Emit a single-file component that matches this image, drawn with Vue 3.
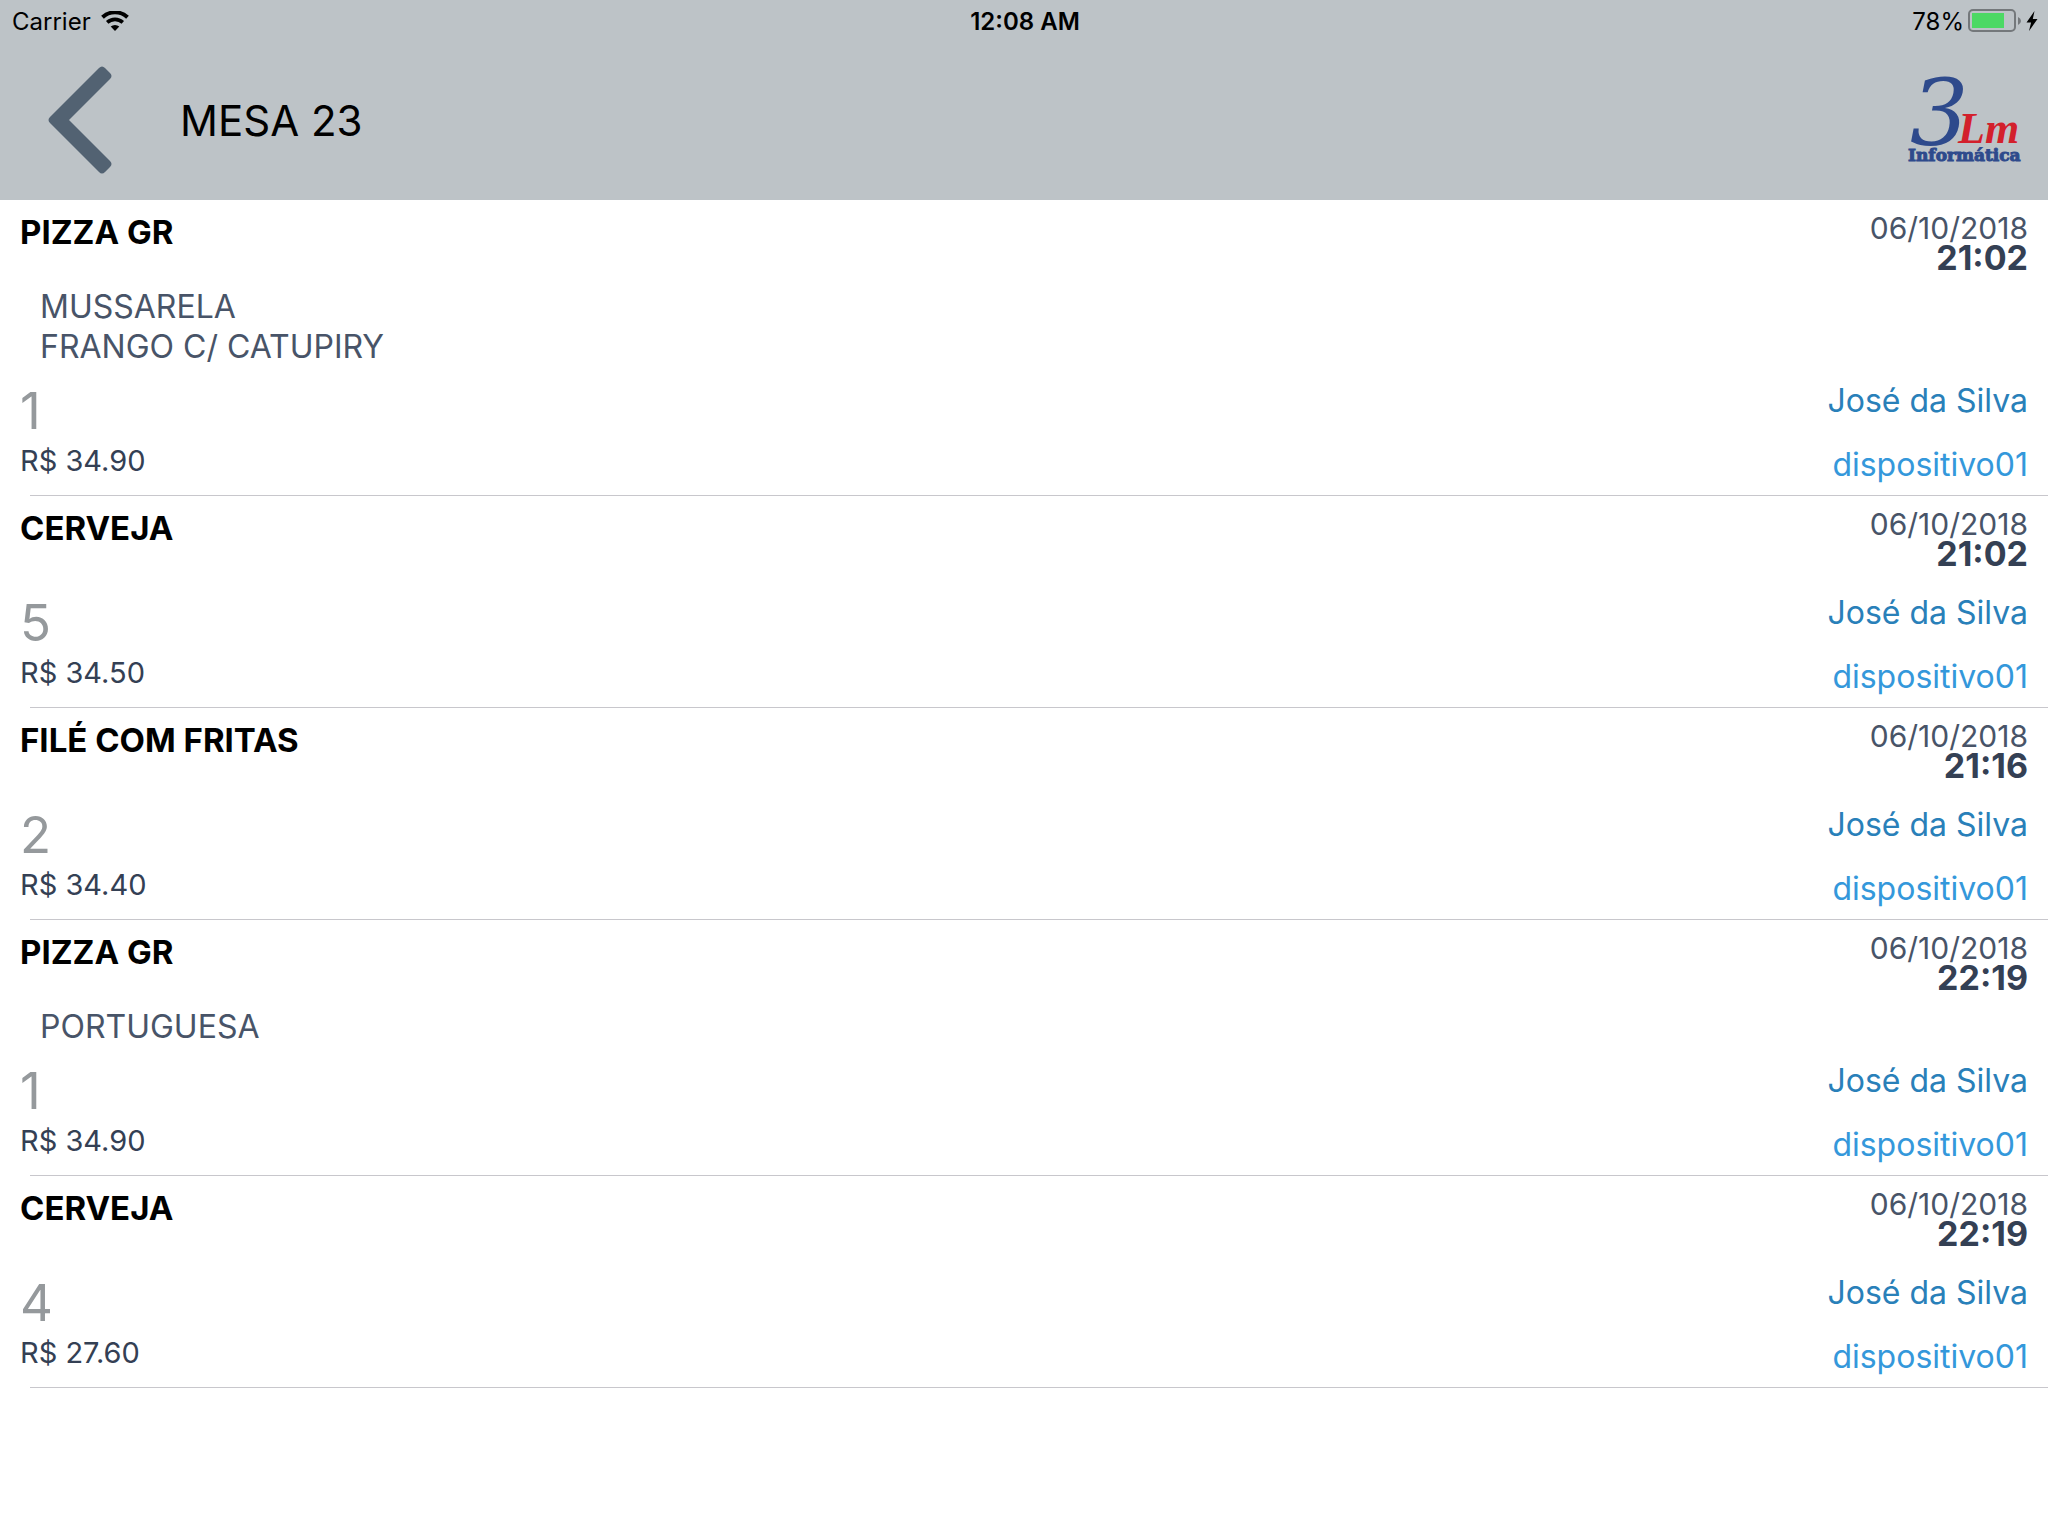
<script setup>
const orders = [
  { name: 'PIZZA GR', extras: ['MUSSARELA', 'FRANGO C/ CATUPIRY'], quantity: 1, price: 'R$ 34.90', date: '06/10/2018', time: '21:02', waiter: 'José da Silva', device: 'dispositivo01' },
  { name: 'CERVEJA', extras: [], quantity: 5, price: 'R$ 34.50', date: '06/10/2018', time: '21:02', waiter: 'José da Silva', device: 'dispositivo01' },
  { name: 'FILÉ COM FRITAS', extras: [], quantity: 2, price: 'R$ 34.40', date: '06/10/2018', time: '21:16', waiter: 'José da Silva', device: 'dispositivo01' },
  { name: 'PIZZA GR', extras: ['PORTUGUESA'], quantity: 1, price: 'R$ 34.90', date: '06/10/2018', time: '22:19', waiter: 'José da Silva', device: 'dispositivo01' },
  { name: 'CERVEJA', extras: [], quantity: 4, price: 'R$ 27.60', date: '06/10/2018', time: '22:19', waiter: 'José da Silva', device: 'dispositivo01' },
]
</script>

<template>
  <div class="screen">
    <header class="header">
      <div class="status">
        <div class="status-left">
          <span>Carrier</span>
          <svg class="wifi" width="28" height="20" viewBox="0 0 28 20" aria-hidden="true">
            <path d="M1.5 6.2a18.5 18.5 0 0 1 25 0" fill="none" stroke="#000" stroke-width="4" />
            <path d="M6.2 11.4a11.5 11.5 0 0 1 15.6 0" fill="none" stroke="#000" stroke-width="3.6" />
            <path d="M9.7 15.6a6.5 6.5 0 0 1 8.6 0L14 20z" />
          </svg>
        </div>
        <span class="clock">12:08 AM</span>
        <div class="status-right">
          <span>78%</span>
          <svg class="battery" width="54" height="24" viewBox="0 0 54 24" aria-hidden="true">
            <rect x="1" y="1" width="46" height="21" rx="4" fill="none" stroke="#74787b" stroke-width="2" />
            <rect x="4" y="4" width="32" height="15" fill="#4cd964" />
            <path d="M50 8q3 1.500 3 4t-3 4z" fill="#74787b" />
          </svg>
          <svg class="bolt" width="12" height="20" viewBox="0 0 12 20" aria-hidden="true">
            <path d="M8.500 0L.5 11.500h4.600L3 20 11.500 8H6.800z" />
          </svg>
        </div>
      </div>
      <div class="bar">
        <button class="back" type="button" aria-label="Voltar">
          <svg width="64" height="110" viewBox="0 0 64 110" aria-hidden="true">
            <path d="M51 3q3-3 6 0l5 5q3 3 0 6L21 55 62 96q3 3 0 6l-5 5q-3 3-6 0L2 58q-3-3 0-6z" fill="#526272" />
          </svg>
        </button>
        <h1 class="title">MESA 23</h1>
        <svg class="logo" width="124" height="160" viewBox="0 0 124 160" role="img" aria-label="3Lm Informática">
          <text class="logo-three" x="6" y="105">3</text>
          <text class="logo-lm" x="54" y="103">Lm</text>
          <text class="logo-name" x="4" y="121">Informática</text>
        </svg>
      </div>
    </header>
    <ul class="orders">
      <li v-for="(order, i) in orders" :key="i" class="order">
        <div class="top">
          <h2 class="name">{{ order.name }}</h2>
          <div class="when">
            <span class="date">{{ order.date }}</span>
            <span class="time">{{ order.time }}</span>
          </div>
        </div>
        <ul v-if="order.extras.length" class="extras">
          <li v-for="extra in order.extras" :key="extra">{{ extra }}</li>
        </ul>
        <div class="bottom">
          <div class="amounts">
            <span class="quantity">{{ order.quantity }}</span>
            <span class="price">{{ order.price }}</span>
          </div>
          <div class="source">
            <span class="waiter">{{ order.waiter }}</span>
            <span class="device">{{ order.device }}</span>
          </div>
        </div>
      </li>
    </ul>
  </div>
</template>

<style>
body {
  margin: 0;
  background: #fff;
}
</style>

<style scoped>
.screen {
  font-family: Inter, "Liberation Sans", sans-serif;
  color: #000;
}
.header {
  background: #bdc3c7;
}
.status {
  display: grid;
  grid-template-columns: 1fr auto 1fr;
  align-items: center;
  box-sizing: border-box;
  height: 40px;
  padding: 2px 10px 0 12px;
  font-size: 24px;
}
.status-left,
.status-right {
  display: flex;
  align-items: center;
}
.wifi {
  margin-left: 10px;
}
.clock {
  font-weight: 600;
}
.status-right {
  justify-content: flex-end;
}
.battery {
  margin: 0 4px;
}
.bar {
  display: flex;
  align-items: center;
  height: 160px;
}
.back {
  display: flex;
  padding: 0;
  margin: 0 68px 0 48px;
  border: 0;
  background: none;
}
.title {
  flex: 1;
  margin: 0;
  font-size: 42px;
  font-weight: 400;
}
.logo {
  margin-right: 20px;
}
.logo-three {
  font: italic 92px "DejaVu Serif", serif;
  fill: #2e4a8c;
}
.logo-lm {
  font: italic bold 44px "Liberation Serif", serif;
  fill: #d3202c;
}
.logo-name {
  font: bold 17px "DejaVu Serif", serif;
  fill: #2e4a8c;
  stroke: #2e4a8c;
  stroke-width: 1px;
}
.orders,
.extras {
  margin: 0;
  padding: 0;
  list-style: none;
}
.order {
  padding: 12px 20px 3px;
  background: linear-gradient(#c8c7cc, #c8c7cc) 30px 100% / 100% 1px no-repeat;
}
.top,
.bottom {
  display: flex;
  justify-content: space-between;
}
.top {
  height: 72px;
}
.name {
  margin: 0;
  font-size: 33px;
  line-height: 40px;
  font-weight: 700;
}
.when,
.source,
.amounts {
  display: flex;
  flex-direction: column;
}
.when,
.source {
  align-items: flex-end;
}
.date {
  font-size: 30px;
  line-height: 32px;
  color: #485468;
}
.time {
  font-size: 34px;
  line-height: 28px;
  font-weight: 700;
  color: #344054;
}
.extras {
  padding: 3px 20px 1px;
  font-size: 32px;
  line-height: 40px;
  color: #485468;
}
.bottom {
  height: 112px;
  padding-top: 13px;
}
.quantity {
  font-size: 51px;
  line-height: 60px;
  color: #95999c;
}
.price {
  font-size: 29px;
  line-height: 40px;
  color: #344054;
}
.source {
  font-size: 32px;
  line-height: 40px;
  gap: 24px;
}
.waiter {
  color: #2980b9;
}
.device {
  color: #3498db;
}
</style>
